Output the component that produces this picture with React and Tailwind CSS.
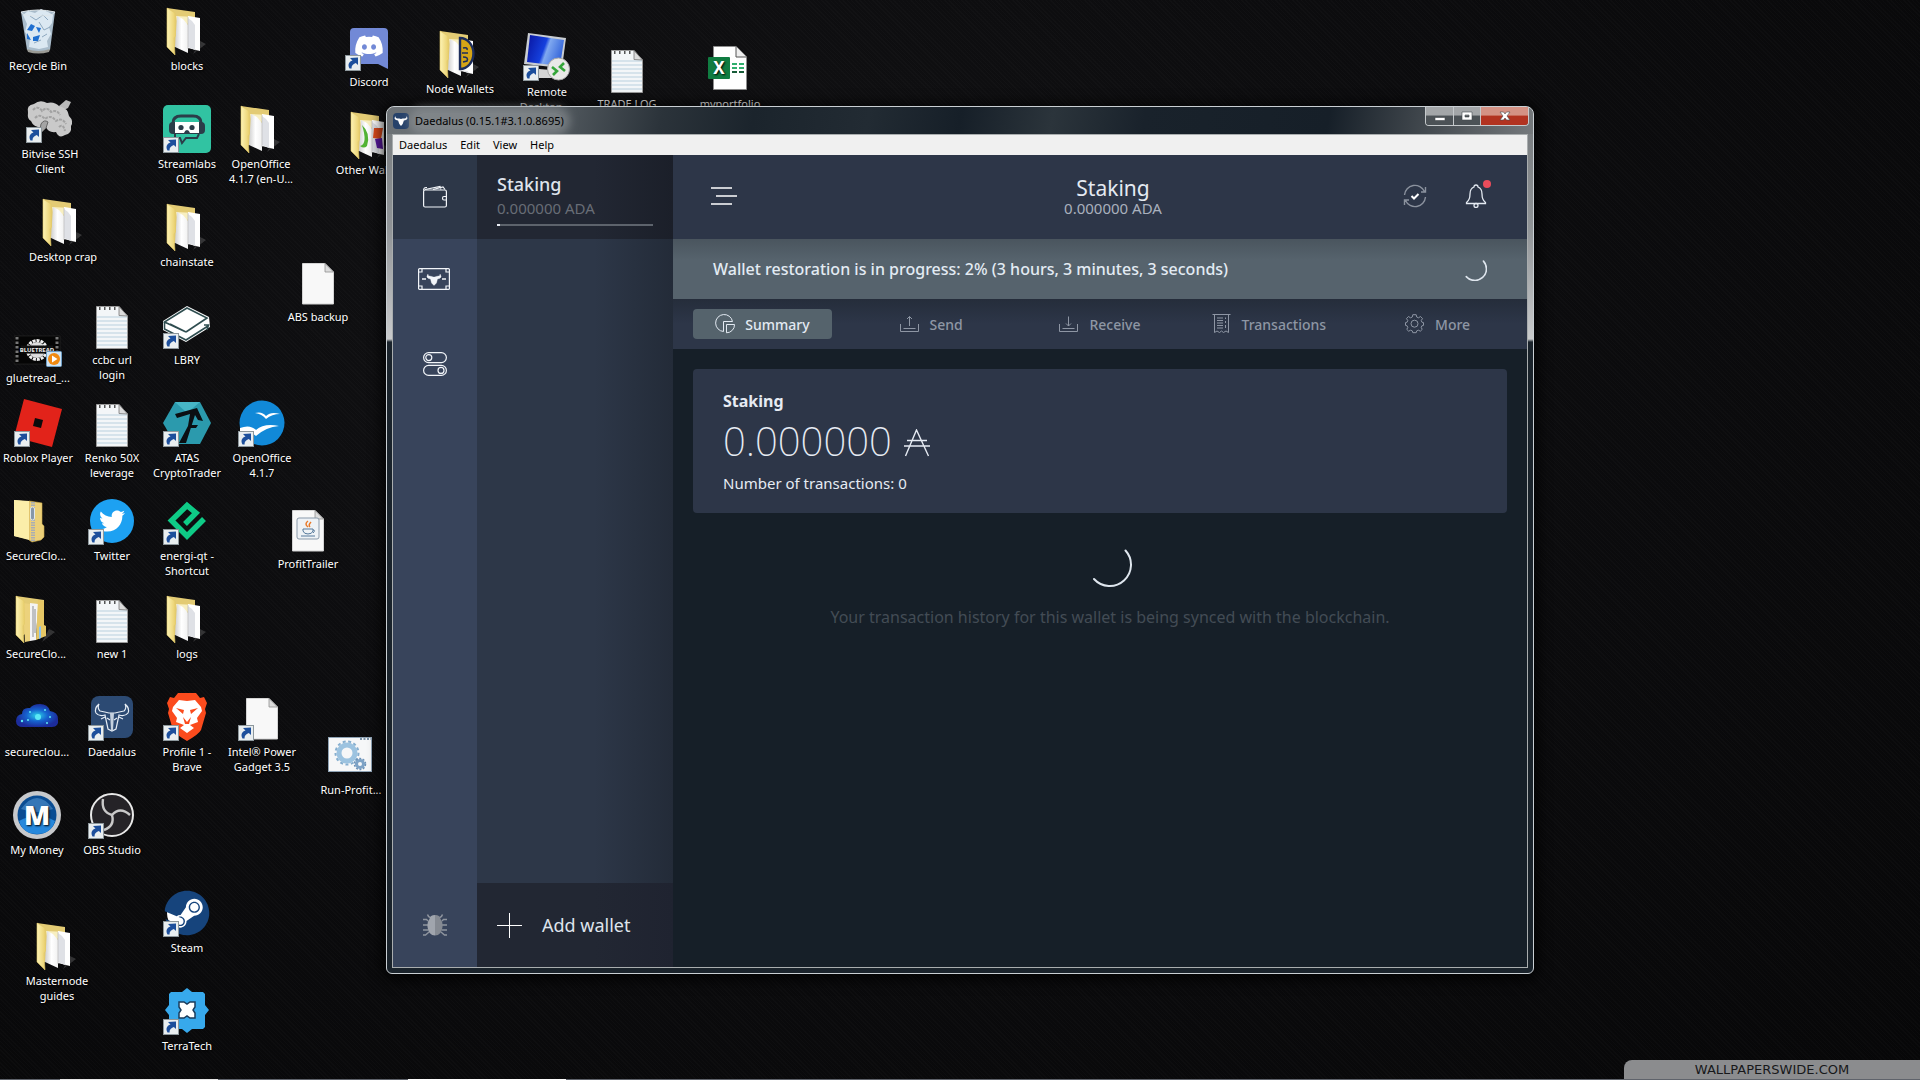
import React from 'react';
import { FaDiscord, FaTwitter, FaSteam } from 'react-icons/fa';

function Shortcut() {
  return (
    <g>
      <rect x="0.5" y="32.5" width="15" height="15" fill="#e9eef0" stroke="#8d979c" />
      <path d="M4.5 45.5 C2.5 42 3.5 38.8 7.5 37.5 L5 35 L13 34.5 L13 42 L10.8 40 C7.8 41 6.2 43 6.6 45.5 Z" fill="#1d4f9c" />
    </g>
  );
}

function Folder({ inner }) {
  return (
    <svg viewBox="0 0 48 48" className="size-12">
      <defs>
        <linearGradient id="fold" x1="0" x2="1" y1="0" y2="0">
          <stop offset="0" stopColor="#fdf3b4" />
          <stop offset="1" stopColor="#e9cf6c" />
        </linearGradient>
        <linearGradient id="paper" x1="0" x2="1" y1="0" y2="0">
          <stop offset="0" stopColor="#cfcfcf" />
          <stop offset="0.5" stopColor="#ffffff" />
          <stop offset="1" stopColor="#f1f1f1" />
        </linearGradient>
      </defs>
      <path d="M30 47 L43 37 L37 34 Z" fill="#ffffff" opacity="0.16" />
      <path d="M4 1 L32 5 L32 20 L12 40 L4 40 Z" fill="#e3cb74" />
      <path d="M13 9 L32 10 L32 14 L15 20 Z" fill="#f8efc0" />
      {inner === 'files' ? (
        <g>
          <path d="M11 8 L18 9 L18 46 L13 47 Z" fill="#ecd27c" />
          <path d="M18 8 L26 9 L24 45 L18 46 Z" fill="#f4f4f4" />
          <path d="M21 11 L21 42 M23 14 L23 38" stroke="#8a8d92" strokeWidth="1" />
          <path d="M26 5 L32 6 L32 30 L34 31 L34 41 L24 45 Z" fill="#e6c766" />
          <path d="M27 32 L29 31 L29 43 L27 44 Z" fill="#8dc3ee" />
        </g>
      ) : (
        <g>
          <path d="M14 9 L20 12 L25 18 L25 46 L12 40 Z" fill="url(#paper)" />
          <path d="M25 9 L37 11 L37 44 L25 41 Z" fill="#ffffff" />
          <path d="M25 11 L29 14 L32 18 L32 43 L25 40 Z" fill="#dfe1e6" />
          <path d="M25 10 L25 42" stroke="#b9b9b9" strokeWidth="0.7" />
        </g>
      )}
      {inner === 'coin' && (
        <g>
          <path d="M25 11 L37 13 L37 42 L25 40 Z" fill="#ffffff" />
          <path d="M24 8 A13 15 0 0 1 24 39 Z" fill="#d5a416" stroke="#1c2d5c" strokeWidth="2.4" />
          <path d="M27 18 Q32 17 31 20 M26 23 H32 M27 27 Q33 27 31 31 L27 32" stroke="#1c2d5c" strokeWidth="1.6" fill="none" />
        </g>
      )}
      {inner === 'art' && (
        <g>
          <path d="M15 14 Q24 22 20 35 Q17 38 13 35 Q21 33 15 14 Z" fill="#52b335" />
          <path d="M27 17 L36 17 L34 28 L26 27 Z" fill="#dc4a1c" />
          <path d="M28 28 L35 27 L36 38 L30 37 Z" fill="#5a1aa0" />
        </g>
      )}
      <path d="M4 1 L12 6 L12.500 29 L11 31 L12 48 L4 40 Z" fill="url(#fold)" stroke="#e2c968" strokeWidth="0.6" />
    </svg>
  );
}

function Zip() {
  return (
    <svg viewBox="0 0 48 48" className="size-12">
      <path d="M2 3 L20 5 L20 43 L2 39 Z" fill="#f7e79c" />
      <path d="M17 4 L30 6 L30 27 L32 29 L32 40 L29 43 L20 45 L17 43 Z" fill="#ecd079" stroke="#c9a94e" strokeWidth="0.6" />
      <path d="M2 3 L17 4 L17 43 L2 39 Z" fill="#fbeea9" />
      <path d="M21 5 L21 44" stroke="#a9adb3" strokeWidth="4" strokeDasharray="1.500 1" />
      <rect x="18.500" y="10" width="4" height="13" rx="2" fill="#8796a8" stroke="#dfe6ee" />
    </svg>
  );
}

function Notepad() {
  return (
    <svg viewBox="0 0 48 48" className="size-12">
      <path d="M8.500 5.500 H31 L39.500 15 V47.500 H8.500 Z" fill="#f3f6f8" stroke="#9a9a9a" />
      <path d="M9 16h30M9 20h30M9 24h30M9 28h30M9 32h30M9 36h30M9 40h30M9 44h30" stroke="#b9d0de" />
      <path d="M31 5.500 L31 14.500 L39.500 15 Z" fill="#dcdcdc" stroke="#777" strokeWidth="0.8" />
      <path d="M11 7.500 H31" stroke="#555" strokeWidth="3" strokeDasharray="1.500 3.500" />
    </svg>
  );
}

function Page({ java, shortcut }) {
  return (
    <svg viewBox="0 0 48 48" className="size-12">
      <path d="M8.500 5.500 H31 L39.500 14 V46 H8.500 Z" fill="#f8f8f8" stroke="#d4d4d4" />
      <path d="M31 5.500 V14 H39.500 Z" fill="#dcdcdc" stroke="#8f8f8f" strokeWidth="0.8" />
      {java && (
        <g fill="none">
          <rect x="13" y="13" width="22" height="21" rx="2" fill="#eef2f6" stroke="#8a9aab" />
          <path d="M24 16 Q20 19 24 22 M27 17 Q24 20 26 22" stroke="#e87a2b" strokeWidth="1.5" />
          <path d="M19 24 H29 V26 Q28 29 24 29 Q20 29 19 26 Z M29 25 Q32 25 29 28" stroke="#54789b" />
          <path d="M17 31 H31" stroke="#54789b" />
        </g>
      )}
      {shortcut && <Shortcut />}
    </svg>
  );
}

function RecycleBin() {
  return (
    <svg viewBox="0 0 48 48" className="size-12">
      <path d="M7 5 Q24 1 41 5 L36 43 Q24 48 13 43 Z" fill="#a9bccb" />
      <path d="M9 8 L14 4 L21 6 L27 2 L34 5 L39 8 L38 16 L35 20 L37 27 L33 34 L34 40 L25 42 L15 40 L16 31 L11 25 L13 17 Z" fill="#dbe8f2" />
      <path d="M16 9 L22 13 L29 8 L34 13 M25 15 L30 23 L36 20 M28 30 L33 27 M20 36 L27 33" stroke="#8ea8bf" fill="none" />
      <path d="M7 5 Q24 1 41 5 Q40 9 24 9 Q8 9 7 5 Z" fill="none" stroke="#dfe6ea" />
      <path d="M13 42 Q24 46 36 42 L35 45 Q24 48 14 45 Z" fill="#9a9a94" />
      <path d="M13 23 L17 17 L21 19 L18 24 Z M22 20 L27 21 L25 26 M13 26 L17 33 L13 32 Z M19 30 L26 28 L24 34 L19 34 Z" fill="#1f6fd0" />
    </svg>
  );
}

function Bitvise() {
  return (
    <svg viewBox="0 0 48 48" className="size-12">
      <path d="M33 11 L40 5 L45 7 L42 13 L36 16 Z" fill="#b9b9b9" />
      <path d="M2 18 Q0 10 8 9 Q14 4 21 8 Q28 6 33 11 Q42 13 43 21 Q48 26 45 31 Q46 39 39 40 Q33 44 30 37 Q22 38 20 32 Q8 34 5 26 Q1 24 2 18 Z" fill="#c9c9c9" />
      <path d="M7 15 Q12 10 16 16 Q21 11 25 17 Q31 14 34 20 M9 23 Q14 18 19 24 Q25 19 30 26 Q36 22 40 29 M33 32 Q37 28 39 36" stroke="#a2a2a2" fill="none" strokeWidth="2" strokeDasharray="3 1" />
      <path d="M13 40 L15 29 Q18 24 22 27 L20 33 Z" fill="#a4a4a4" stroke="#666" />
      <Shortcut />
    </svg>
  );
}

function Streamlabs() {
  return (
    <svg viewBox="0 0 48 48" className="size-12">
      <rect width="48" height="48" rx="5" fill="#31c3a2" />
      <path d="M10 18 Q10 11 18 11 H30 Q38 11 38 18" fill="none" stroke="#2b3d49" strokeWidth="3" />
      <rect x="6" y="17" width="36" height="12" rx="4" fill="#2b3d49" />
      <path d="M12 17 H36 V28 H27 Q26 25 24 25 Q22 25 21 28 H12 Z" fill="#fff" />
      <circle cx="18" cy="22.500" r="2.600" fill="#2b3d49" />
      <circle cx="29" cy="22.500" r="2.600" fill="#2b3d49" />
      <path d="M12 29 V33 H17 L19 38 L23 33 H34 L36 29" fill="none" stroke="#2b3d49" strokeWidth="2" />
      <Shortcut />
    </svg>
  );
}

function Discord() {
  return (
    <div className="relative size-12">
      <svg viewBox="0 0 48 48" className="size-12">
        <path d="M9 5 H39 Q43 5 43 9 V46 L33 41 H9 Q5 41 5 37 V9 Q5 5 9 5 Z" fill="#7289d6" />
      </svg>
      <FaDiscord className="absolute left-[9px] top-[8px] size-[30px] text-white" />
      <svg viewBox="0 0 48 48" className="absolute inset-0 size-12">
        <Shortcut />
      </svg>
    </div>
  );
}

function Remote() {
  return (
    <svg viewBox="0 0 48 48" className="size-12">
      <defs>
        <linearGradient id="screen" x1="0" x2="1" y1="0.3" y2="0.6">
          <stop offset="0" stopColor="#0a1aa8" />
          <stop offset="0.45" stopColor="#1540dd" />
          <stop offset="0.55" stopColor="#7fa8f0" />
          <stop offset="1" stopColor="#2d5fd8" />
        </linearGradient>
      </defs>
      <path d="M5 0 L43 5 L39 35 L1 31 Z" fill="#c9cdd2" />
      <path d="M7 2 L41 7 L37 33 L4 29 Z" fill="url(#screen)" />
      <path d="M16 36 L28 37 L32 45 L16 45 Z" fill="#d5d5d5" />
      <circle cx="35.500" cy="36" r="11" fill="#e9e9e7" stroke="#a7a7a7" />
      <path d="M29 34 L34 38 L30 42 M41 30 L37 34 L42 38" fill="none" stroke="#35a639" strokeWidth="2.600" />
      <Shortcut />
    </svg>
  );
}

function Excel() {
  return (
    <svg viewBox="0 0 48 48" className="size-12">
      <path d="M7.500 1.500 H30 L40.500 12 V44.500 H7.500 Z" fill="#fff" stroke="#8d8d8d" />
      <path d="M30 1.500 V12 H40.500" fill="#eee" stroke="#555" />
      <path d="M26 19h5M26 23h5M33 19h5M33 23h5" stroke="#2fae6c" strokeWidth="2" />
      <path d="M26 27h5M33 27h5" stroke="#175c38" strokeWidth="2" />
      <rect x="2" y="12" width="22" height="22" rx="1" fill="#107c41" />
      <text x="13" y="29" textAnchor="middle" fontSize="17" fontWeight="700" fill="#fff">X</text>
      <path d="M0 0" />
    </svg>
  );
}

function Video() {
  return (
    <svg viewBox="0 0 48 48" className="size-12">
      <rect x="0" y="17" width="46" height="28" fill="#050505" stroke="#333" strokeWidth="0.5" />
      <path d="M3 18 V45 M43 18 V45" stroke="#777" strokeWidth="3" strokeDasharray="2.500 2" />
      <circle cx="23" cy="31" r="9.500" fill="none" stroke="#eee" strokeWidth="3" strokeDasharray="3 1" />
      <circle cx="23" cy="31" r="8" fill="#ddd" />
      <rect x="7" y="26.500" width="32" height="8" fill="#111" />
      <text x="23" y="33" textAnchor="middle" fontSize="6" fontWeight="700" fill="#eee">BLUETREAD</text>
      <rect x="32.500" y="32.500" width="15" height="15" rx="1" fill="#cfe4f5" stroke="#6d9cc4" />
      <circle cx="40" cy="40" r="6" fill="#f08a12" />
      <path d="M38 36.500 L43.500 40 L38 43.500 Z" fill="#fff" />
    </svg>
  );
}

function Lbry() {
  return (
    <svg viewBox="0 0 48 48" className="size-12">
      <path d="M0 20 L24 5 L46 16 L47 26 L23 41 L0 29 Z" fill="#fff" />
      <path d="M23 31 L1.500 21 L24 7 L44 17 L23 31 M1.500 21 V28 L23 39 L45 25 M41 24 L45.500 24 L44 29 M7 23 L23 31" fill="none" stroke="#2f4d50" strokeWidth="1.600" />
      <Shortcut />
    </svg>
  );
}

function Roblox() {
  return (
    <svg viewBox="0 0 48 48" className="size-12">
      <path d="M10 0 L48 10 L38 48 L0 38 Z" fill="#e2231a" />
      <path d="M21 19 L29 21 L27 29 L19 27 Z" fill="#0b0b0c" />
      <Shortcut />
    </svg>
  );
}

function Atas() {
  return (
    <svg viewBox="0 0 48 48" className="size-12">
      <path d="M12 3 H37 L48 24 L37 45 H12 L0 24 Z" fill="#2b9aad" />
      <path d="M12 3 H37 L24 14 Z" fill="#47b6c6" />
      <path d="M12 15 L34 9 L40 22 L35 21 L32 16 L23 44 H16 L25 27 L27 15 L14 19 Z M27 26 H35 L33 29 H26 Z" fill="#0b0f12" />
      <Shortcut />
    </svg>
  );
}

function OpenOffice() {
  return (
    <svg viewBox="0 0 48 48" className="size-12">
      <circle cx="24" cy="24" r="22.500" fill="#1189d8" />
      <path d="M17 14 Q24 12 28 17 Q33 12 42 15 Q34 15 28 20 Q24 15 17 14 Z" fill="#fff" />
      <path d="M2 29 Q12 25 18 31 Q26 24 41 27 Q28 28 18 37 Q11 31 2 33 Z" fill="#fff" />
      <Shortcut />
    </svg>
  );
}

function Twitter() {
  return (
    <div className="relative size-12">
      <svg viewBox="0 0 48 48" className="size-12">
        <circle cx="24" cy="24" r="22" fill="#1da1f2" />
      </svg>
      <FaTwitter className="absolute left-[11px] top-[11px] size-[26px] text-white" />
      <svg viewBox="0 0 48 48" className="absolute inset-0 size-12">
        <Shortcut />
      </svg>
    </div>
  );
}

function Energi() {
  return (
    <svg viewBox="0 0 48 48" className="size-12">
      <path d="M22 27 L33 16 L24 8.500 L8.500 23.500 L24 39 L41 22" fill="none" stroke="#0ecb86" strokeWidth="5.500" />
      <Shortcut />
    </svg>
  );
}

function Cloud() {
  return (
    <svg viewBox="0 0 48 48" className="size-12">
      <defs>
        <radialGradient id="cloud">
          <stop offset="0" stopColor="#2ad3e8" />
          <stop offset="0.5" stopColor="#1663cf" />
          <stop offset="1" stopColor="#1c2c9b" />
        </radialGradient>
      </defs>
      <path d="M10 34 Q3 34 3 28 Q3 22 9 21 Q9 14 17 15 Q20 11 27 11 Q35 11 37 18 Q45 19 45 26 Q46 34 39 34 Z" fill="url(#cloud)" />
      <g fill="#5ce9f5">
        <circle cx="25" cy="24" r="3" />
        <circle cx="17" cy="19" r="1" />
        <circle cx="32" cy="17" r="1" />
        <circle cx="37" cy="24" r="1" />
        <circle cx="9" cy="28" r="1.200" />
        <circle cx="34" cy="30" r="1" />
        <circle cx="15" cy="27" r="1" />
      </g>
    </svg>
  );
}

function DaedalusIcon() {
  return (
    <svg viewBox="0 0 48 48" className="size-12">
      <rect x="3" y="3" width="42" height="42" rx="8" fill="#2c4a73" />
      <g fill="none" stroke="#e6edf5" strokeWidth="1.200">
        <path d="M11 11 Q6 15 8 20 Q11 24 17 22 L20 36 L24 38 L28 36 L31 22 Q37 24 40 20 Q42 15 37 11 Q39 15 36 18 Q31 19 27 20 H21 Q17 19 12 18 Q9 15 11 11 Z" />
        <path d="M13 26 L17 24 M35 26 L31 24 M19 25 L22 27 M29 25 L26 27" />
      </g>
      <path d="M22 20 H26 L25 37 H23 Z" fill="#c4d0de" />
      <Shortcut />
    </svg>
  );
}

function Brave() {
  return (
    <svg viewBox="0 0 48 48" className="size-12">
      <path d="M15 0 H33 L37 5 L41 4 L44 10 L42 16 L43 20 L38 37 Q36 41 24 48 Q12 41 10 37 L5 20 L6 16 L4 10 L7 4 L11 5 Z" fill="#fb4b1d" />
      <path d="M24 8 L32 7 L38 14 L39 18 L34 25 L35 29 L27 32 L31 35 L24 40 L17 35 L21 32 L13 29 L14 25 L9 18 L10 14 L16 7 Z" fill="#fff" />
      <path d="M13 15 L21 17 L20 21 Z M35 15 L27 17 L28 21 Z M20 24 L24 29 L28 24 L26 31 H22 Z" fill="#fb4b1d" />
      <Shortcut />
    </svg>
  );
}

function Gears() {
  return (
    <svg viewBox="0 0 48 48" className="size-12">
      <rect x="1.500" y="6.500" width="43" height="34" fill="#f6f7f8" stroke="#8fa3b5" />
      <path d="M33 8 H44" stroke="#52708c" strokeWidth="1.500" strokeDasharray="2 1.500" />
      <circle cx="20" cy="22" r="8" fill="none" stroke="#9cc3e0" strokeWidth="5" />
      <circle cx="20" cy="22" r="11.500" fill="none" stroke="#85aecf" strokeWidth="2" strokeDasharray="3 2.500" />
      <circle cx="33" cy="33" r="3.500" fill="none" stroke="#7ea3c6" strokeWidth="3" />
      <circle cx="33" cy="33" r="5.500" fill="none" stroke="#6c92b8" strokeWidth="1.500" strokeDasharray="2 1.500" />
    </svg>
  );
}

function MyMoney() {
  return (
    <svg viewBox="0 0 48 48" className="size-12">
      <circle cx="24" cy="24" r="24" fill="#c7c9cc" />
      <circle cx="24" cy="24" r="19.500" fill="#0a4d93" />
      <path d="M6 30 Q24 20 42 30 Q38 43 24 43 Q10 43 6 30 Z" fill="#2688dc" />
      <path d="M8 18 Q24 -4 40 18 Q24 24 8 18 Z" fill="#5294cf" opacity="0.6" />
      <text x="24" y="34" textAnchor="middle" fontSize="27" fontWeight="900" fill="#fff">M</text>
    </svg>
  );
}

function Obs() {
  return (
    <svg viewBox="0 0 48 48" className="size-12">
      <circle cx="24" cy="24" r="21" fill="#252327" stroke="#e8e8e8" strokeWidth="2" />
      <g fill="none" stroke="#c9c9c9" strokeWidth="2.400">
        <path d="M24 24 Q13 21 15 8" />
        <path d="M24 24 Q32 15 42 24" />
        <path d="M24 24 Q27 35 16 39" />
      </g>
      <Shortcut />
    </svg>
  );
}

function Steam() {
  return (
    <div className="relative size-12">
      <svg viewBox="0 0 48 48" className="size-12">
        <circle cx="24" cy="24" r="20" fill="#fff" />
      </svg>
      <FaSteam className="absolute left-[1px] top-[1px] size-[46px] text-[#16447c]" />
      <svg viewBox="0 0 48 48" className="absolute inset-0 size-12">
        <Shortcut />
      </svg>
    </div>
  );
}

function TerraTech() {
  return (
    <svg viewBox="0 0 48 48" className="size-12">
      <path d="M8 5 H19 L24 1 L29 5 H40 L42 7 V18 L46 23 L42 28 V40 L40 42 H29 L24 46 L19 42 H8 L6 40 V28 L2 23 L6 18 V7 Z" fill="#37a9ec" />
      <path d="M16 15 H21 L24 17 L27 15 H32 V20 L30 23 L32 26 V31 H27 L24 29 L21 31 H16 V26 L18 23 L16 20 Z" fill="#fff" stroke="#1b3c5c" strokeWidth="1.500" />
      <Shortcut />
    </svg>
  );
}

const shortcuts = [
  { label: 'Recycle Bin', icon: <RecycleBin />, x: 38, y: 7 },
  { label: 'blocks', icon: <Folder />, x: 187, y: 7 },
  { label: 'Discord', icon: <Discord />, x: 369, y: 23 },
  { label: 'Node Wallets', icon: <Folder inner="coin" />, x: 460, y: 30 },
  { label: 'Remote Desktop ...', icon: <Remote />, x: 547, y: 33 },
  { label: 'TRADE LOG', icon: <Notepad />, x: 627, y: 45 },
  { label: 'myportfolio', icon: <Excel />, x: 730, y: 45 },
  { label: 'Bitvise SSH Client', icon: <Bitvise />, x: 50, y: 95 },
  { label: 'Streamlabs OBS', icon: <Streamlabs />, x: 187, y: 105 },
  { label: 'OpenOffice 4.1.7 (en-U...', icon: <Folder />, x: 261, y: 105 },
  { label: 'Other Wallets', icon: <Folder inner="art" />, x: 371, y: 111 },
  { label: 'Desktop crap', icon: <Folder />, x: 63, y: 198 },
  { label: 'chainstate', icon: <Folder />, x: 187, y: 203 },
  { label: 'ABS backup', icon: <Page />, x: 318, y: 258 },
  { label: 'gluetread_...', icon: <Video />, x: 38, y: 319 },
  { label: 'ccbc url\nlogin', icon: <Notepad />, x: 112, y: 301 },
  { label: 'LBRY', icon: <Lbry />, x: 187, y: 301 },
  { label: 'Roblox Player', icon: <Roblox />, x: 38, y: 399 },
  { label: 'Renko 50X leverage', icon: <Notepad />, x: 112, y: 399 },
  { label: 'ATAS CryptoTrader', icon: <Atas />, x: 187, y: 399 },
  { label: 'OpenOffice 4.1.7', icon: <OpenOffice />, x: 262, y: 399 },
  { label: 'SecureClo...', icon: <Zip />, x: 36, y: 497 },
  { label: 'Twitter', icon: <Twitter />, x: 112, y: 497 },
  { label: 'energi-qt - Shortcut', icon: <Energi />, x: 187, y: 497 },
  { label: 'ProfitTrailer', icon: <Page java />, x: 308, y: 505 },
  { label: 'SecureClo...', icon: <Folder inner="files" />, x: 36, y: 595 },
  { label: 'new 1', icon: <Notepad />, x: 112, y: 595 },
  { label: 'logs', icon: <Folder />, x: 187, y: 595 },
  { label: 'secureclou...', icon: <Cloud />, x: 37, y: 693 },
  { label: 'Daedalus', icon: <DaedalusIcon />, x: 112, y: 693 },
  { label: 'Profile 1 - Brave', icon: <Brave />, x: 187, y: 693 },
  { label: 'Intel® Power Gadget 3.5', icon: <Page shortcut />, x: 262, y: 693 },
  { label: 'Run-Profit...', icon: <Gears />, x: 351, y: 731 },
  { label: 'My Money', icon: <MyMoney />, x: 37, y: 791 },
  { label: 'OBS Studio', icon: <Obs />, x: 112, y: 791 },
  { label: 'Steam', icon: <Steam />, x: 187, y: 889 },
  { label: 'Masternode guides', icon: <Folder />, x: 57, y: 922 },
  { label: 'TerraTech', icon: <TerraTech />, x: 187, y: 987 },
];

function DesktopIcon({ label, icon, x, y }) {
  return (
    <button
      type="button"
      className="absolute flex w-[76px] -translate-x-1/2 flex-col items-center gap-[3px] text-center text-[11px] leading-[15px] text-white [text-shadow:1px_1px_2px_#000]"
      style={{ left: x, top: y }}
    >
      {icon}
      <span className="whitespace-pre-line">{label}</span>
    </button>
  );
}

function Bull({ className }) {
  return (
    <svg viewBox="0 0 16 12" className={className} fill="currentColor">
      <path d="M1.500 0 Q1 2.500 3.500 3 L6 3 Q8 4 10 3 L12.500 3 Q15 2.500 14.500 0 Q17 3 14.500 4.500 Q13 5.500 11.500 5.500 L10 9.500 L8 12 L6 9.500 L4.500 5.500 Q3 5.500 1.500 4.500 Q-1 3 1.500 0 Z" />
    </svg>
  );
}

function TitleBar() {
  return (
    <div className="flex h-[27px] justify-between rounded-t-lg bg-[linear-gradient(100deg,#6d7276_0%,#5f666b_12%,#2b333a_24%,#1b242c_32%,#222b33_42%,#161f28_50%,#2b343b_58%,#19222b_66%,#161f28_82%,#4a5055_92%,#75797c_100%)] pl-1.5">
      <div className="flex items-center gap-1.5">
        <span className="flex size-4 items-center justify-center rounded-sm bg-[#27426a] text-white">
          <Bull className="h-[10px] w-[14px]" />
        </span>
        <span className="rounded-full bg-[#8f9497]/60 text-[11px] leading-4 text-black shadow-[0_0_8px_6px_rgba(143,148,151,0.6)]">
          Daedalus (0.15.1#3.1.0.8695)
        </span>
      </div>
      <div className="mr-1 flex h-[19px] overflow-hidden rounded-b-[4px] border border-t-0 border-[#c5c9cb] text-white">
        <button type="button" aria-label="Minimize" className="flex w-7 items-center justify-center border-r border-[#c5c9cb] bg-linear-to-b from-[#a3a6a8] from-45% to-[#4c5256] to-50%">
          <svg viewBox="0 0 12 12" className="size-3">
            <path d="M1 7.500h10v3h-10z" fill="#fff" stroke="#45494d" strokeWidth="0.6" />
          </svg>
        </button>
        <button type="button" aria-label="Maximize" className="flex w-[27px] items-center justify-center border-r border-[#c5c9cb] bg-linear-to-b from-[#a3a6a8] from-45% to-[#4c5256] to-50%">
          <svg viewBox="0 0 12 12" className="size-3">
            <path d="M1 2h10v8h-10z M4 5v2h4v-2z" fill="#fff" fillRule="evenodd" stroke="#45494d" strokeWidth="0.6" />
          </svg>
        </button>
        <button type="button" aria-label="Close" className="flex w-[47px] items-center justify-center bg-linear-to-b from-[#d49284] from-45% to-[#b23320] to-50%">
          <svg viewBox="0 0 12 12" className="size-3">
            <path d="M1 2h3.500L6 4l1.500-2H11L8 6l3 4H7.500L6 8l-1.500 2H1l3-4z" fill="#fff" stroke="#45494d" strokeWidth="0.6" />
          </svg>
        </button>
      </div>
    </div>
  );
}

function MenuBar() {
  return (
    <nav className="flex h-5 items-center gap-[13px] bg-[#f0f0f0] px-1.5 text-[11px] text-black">
      {['Daedalus', 'Edit', 'View', 'Help'].map((item) => (
        <button key={item} type="button">{item}</button>
      ))}
    </nav>
  );
}

function Sidebar() {
  return (
    <aside className="flex w-[84px] shrink-0 flex-col bg-[#38445b] text-[#f2f5f9]">
      <button type="button" aria-label="Wallets" className="flex h-[84px] items-center justify-center bg-[#2d3748]">
        <svg viewBox="0 0 24 24" className="size-6" fill="none" stroke="currentColor" strokeWidth="1.200">
          <rect x="0.600" y="5" width="22.800" height="17" rx="1.500" />
          <path d="M0.600 5.500 Q0.600 2.500 3 2.500 L4 2.500 M2 4.500 L17 1.500 L18 4.500 M10 4.500 L20 2 L22 4.500" />
          <path d="M23.500 11.500 H21 Q19.500 11.500 19.500 13.200 Q19.500 15 21 15 H23.500" />
        </svg>
      </button>
      <button type="button" aria-label="Staking" className="flex h-[84px] items-center justify-center pr-0.5 pb-1">
        <svg viewBox="0 0 32 22" className="h-[22px] w-8" fill="none" stroke="currentColor" strokeWidth="1.200">
          <rect x="0.600" y="0.600" width="30.800" height="20.800" rx="1" />
          <path d="M4 1 L4 4 L1 4 M28 1 V4 H31 M1 18 H4 V21 M31 18 H28 V21" />
          <path d="M4 11 H8 M24 11 H28" strokeWidth="1.600" />
          <path d="M10 6 Q9.500 8 11.500 8 L14 8.500 Q16 9.500 18 8.500 L20.500 8 Q22.500 8 22 6 Q24.500 9 21.500 10.500 L19.500 11 L18.500 15 L16 17.500 L13.500 15 L12.500 11 L10.500 10.500 Q7.500 9 10 6 Z" fill="currentColor" strokeWidth="0.300" />
        </svg>
      </button>
      <button type="button" aria-label="Settings" className="flex h-[84px] items-center justify-center pb-0.5">
        <svg viewBox="0 0 24 24" className="size-6" fill="none" stroke="currentColor" strokeWidth="1.200">
          <rect x="0.600" y="0.600" width="22.800" height="10" rx="5" />
          <rect x="0.600" y="13.400" width="22.800" height="10" rx="5" />
          <circle cx="5.800" cy="5.600" r="3" />
          <circle cx="18" cy="18.400" r="3" />
        </svg>
      </button>
      <button type="button" aria-label="Network info" className="mt-auto flex h-[84px] items-center justify-center">
        <svg viewBox="0 0 24 22" className="h-[22px] w-6" fill="none" stroke="#8f959f" strokeWidth="1.400">
          <path d="M4.500 0.500 Q5 3 8 4 M19.500 0.500 Q19 3 16 4 M0 5.500 H3.500 L5 7 M24 5.500 H20.500 L19 7 M0 11 H5 M24 11 H19 M0 16 H5 M24 16 H19 M0 21 H2.500 L6 18 M24 21 H21.500 L18 18" />
          <path d="M12 1 Q17 1 17.500 5 Q20 8 19.500 13 Q18.500 21.500 12 21.500 Z" fill="#858a92" stroke="none" />
          <path d="M12 1 Q7 1 6.500 5 Q4 8 4.500 13 Q5.500 21.500 12 21.500 Z" fill="#a0a5ad" stroke="none" />
        </svg>
      </button>
    </aside>
  );
}

function WalletList() {
  return (
    <section className="flex w-[196px] shrink-0 flex-col justify-between bg-[linear-gradient(90deg,#2d3748_60%,#232b38_100%)]">
      <button type="button" className="h-[84px] bg-[linear-gradient(90deg,#222733_60%,#1b1f29_100%)] px-5 pt-1 text-left">
        <span className="block text-[18px] leading-6 font-medium text-[#dfe4ec]">Staking</span>
        <span className="block pt-1 text-[15px] leading-4 text-[#686d76]">0.000000 ADA</span>
        <span className="mt-2 block h-0.5 bg-[#5d636c]">
          <span className="block h-0.5 w-[2%] bg-[#e9edf3]" />
        </span>
      </button>
      <button type="button" className="flex h-[84px] items-center gap-5 bg-[linear-gradient(90deg,#222733_60%,#1f2330_100%)] px-5 text-[18px] text-[#dfe4ec]">
        <svg viewBox="0 0 25 25" className="size-[25px]" stroke="#fff">
          <path d="M12.500 0V25M0 12.500H25" />
        </svg>
        Add wallet
      </button>
    </section>
  );
}

function TopBar() {
  return (
    <header className="flex h-[84px] items-center justify-between bg-[#2d3648] pr-10 pb-0.5 pl-[38px] text-[#e4eaf2]">
      <button type="button" aria-label="Toggle menu" className="w-28">
        <svg viewBox="0 0 26 18" className="h-[18px] w-[26px]" stroke="#fff" strokeWidth="1.400">
          <path d="M0 1H21M5 9H26M0 17H21" />
        </svg>
      </button>
      <div className="text-center">
        <h1 className="text-[21px] leading-6">Staking</h1>
        <p className="text-[15px] leading-4 text-[#a9b0bd]">0.000000 ADA</p>
      </div>
      <div className="flex w-[84px] items-center justify-between">
        <svg viewBox="0 0 24 24" className="size-6" fill="none" stroke="#8b929e" strokeWidth="1.400">
          <path d="M1.500 11 A10.500 10.500 0 0 1 21.500 7.500 M22.500 3 V8 H18 M22.500 13 A10.500 10.500 0 0 1 2.500 16.500 M1.500 21 V16 H6" />
          <path d="M8.500 12 L11 14.500 L15.500 10" stroke="#fff" strokeWidth="2" />
        </svg>
        <button type="button" aria-label="Notifications" className="relative">
          <svg viewBox="0 0 22 24" className="h-6 w-[22px]" fill="none" stroke="currentColor" strokeWidth="1.300">
            <path d="M9 3 Q9 1 11 1 Q13 1 13 3 Q17 4.500 17 10 Q17 16 20.500 18.500 V19.500 H1.500 V18.500 Q5 16 5 10 Q5 4.500 9 3 Z" />
            <circle cx="11" cy="21.500" r="2" />
          </svg>
          <span className="absolute -top-1 -right-1 size-2 rounded-full bg-[#ea4c5b]" />
        </button>
      </div>
    </header>
  );
}

const tabs = [
  {
    name: 'Summary',
    icon: (
      <>
        <path d="M17.500 7.500 A8.500 8.500 0 1 0 8.500 17.500 V7.500 Z" />
        <path d="M11.500 10.500 H19.500 A8 8 0 0 1 11.500 18.800 Z" />
      </>
    ),
  },
  { name: 'Send', icon: <path d="M0.500 10 V17.500 H18.500 V10 M3.500 14.500 H15.500 M9.500 12 V2.500 M7 5 L9.500 2.500 L12 5" /> },
  { name: 'Receive', icon: <path d="M0.500 10 V17.500 H18.500 V10 M3.500 14.500 H15.500 M9.500 2.500 V12 M7 9.500 L9.500 12 L12 9.500" /> },
  {
    name: 'Transactions',
    icon: <path d="M0.500 0.500 H18.500 M2.500 0.500 V18.500 L5 17 L7.500 18.500 L9.500 17 L11.500 18.500 L14 17 L16.500 18.500 V0.500 M5 4 H11 M5 6.500 H11 M5 9 H11 M5 11.500 H11 M5 14 H11 M13.500 3.500 V5 M13.500 7 V9 M13.500 11 V14" />,
  },
  {
    name: 'More',
    icon: (
      <>
        <path d="M7.800 0.700 H11.200 L11.700 3 L13.500 3.800 L15.500 2.500 L17.500 4.600 L16.200 6.600 L16.900 8.200 L18.500 8.600 V11.400 L16.900 11.800 L16.200 13.400 L17.200 15.400 L15.300 17.200 L13.400 16.200 L11.700 16.900 L11.200 18.700 H7.800 L7.300 16.900 L5.600 16.200 L3.700 17.200 L1.800 15.400 L2.800 13.400 L2.100 11.800 L0.500 11.400 V8.600 L2.100 8.200 L2.800 6.600 L1.500 4.600 L3.500 2.500 L5.500 3.800 L7.300 3 Z" />
        <circle cx="9.500" cy="9.700" r="3.500" />
      </>
    ),
  },
];

function Tabs() {
  return (
    <nav className="grid h-[50px] grid-cols-5 items-center justify-items-center bg-[linear-gradient(180deg,#252d3b_0%,#2d3648_50%)] px-[5px]">
      {tabs.map((tab, i) => (
        <button
          key={tab.name}
          type="button"
          className={
            i === 0
              ? 'flex h-[30px] items-center gap-2.5 rounded bg-[#55636c] px-[22px] text-[14px] font-medium text-[#e3eaf2]'
              : 'flex h-[30px] items-center gap-2.5 text-[14px] font-medium text-[#8e96a4]'
          }
        >
          <svg viewBox="0 0 20 20" className="size-5" fill="none" stroke="currentColor" strokeWidth="1">
            {tab.icon}
          </svg>
          {tab.name}
        </button>
      ))}
    </nav>
  );
}

function Spinner({ className }) {
  return (
    <svg viewBox="0 0 44 44" className={className} fill="none" stroke="#dfe6ee" strokeLinecap="round">
      <path d="M37.500 7.500 A21 21 0 0 1 6 36" />
    </svg>
  );
}

function Summary() {
  return (
    <main className="flex-1 bg-[#161f28] py-5 pl-5">
      <section className="mr-5 rounded bg-[#2d3648] px-[30px] py-5 text-[#e6ebf3]">
        <h2 className="text-[16px] leading-6 font-bold">Staking</h2>
        <div className="flex items-center gap-3 pt-1 pb-2">
          <span className="text-[40px] leading-[48px] font-extralight">0.000000</span>
          <svg viewBox="0 0 26 28" className="mt-1 h-7 w-[26px]" fill="none" stroke="currentColor" strokeWidth="1.400">
            <path d="M1.500 27 L12.500 1 L24.500 27 M3 11.500 H23 M0 17 H26" />
          </svg>
        </div>
        <p className="text-[15px] leading-5">Number of transactions: 0</p>
      </section>
      <div className="flex flex-col items-center gap-[18px] pt-[30px]">
        <Spinner className="size-11 stroke-2" />
        <p className="text-[16px] leading-6 text-[#434c55]">
          Your transaction history for this wallet is being synced with the blockchain.
        </p>
      </div>
    </main>
  );
}

export default function App() {
  return (
    <div className="relative min-h-screen overflow-hidden bg-[#09090a] bg-[repeating-linear-gradient(45deg,rgba(255,255,255,0.014)_0_1px,transparent_1px_3px),radial-gradient(ellipse_at_40%_30%,#121214_0%,#0c0c0e_45%,#070708_100%)] font-['Noto_Sans',sans-serif]">
      {shortcuts.map((item) => (
        <DesktopIcon key={`${item.x}-${item.y}`} {...item} />
      ))}

      <div className="absolute inset-x-[386px] inset-y-[106px] flex flex-col rounded-t-lg rounded-b-md border border-[#c9cfd3] bg-[linear-gradient(180deg,#75797c_0,#8f9396_120px,#c9cbcc_232px,#1a232b_235px)] shadow-[0_2px_14px_4px_rgba(0,0,0,0.8)]">
        <TitleBar />
        <div className="mx-[5px] mb-[5px] flex flex-1 flex-col border border-[#a9adae]">
          <MenuBar />
          <div className="flex flex-1">
            <Sidebar />
            <WalletList />
            <div className="flex flex-1 flex-col">
              <TopBar />
              <div className="flex h-[60px] items-center justify-between bg-[linear-gradient(180deg,#4a555e_0%,#56636d_35%)] px-10">
                <p className="text-[16px] font-medium text-[#e3ebf3]">
                  Wallet restoration is in progress: 2% (3 hours, 3 minutes, 3 seconds)
                </p>
                <Spinner className="size-6 stroke-3" />
              </div>
              <Tabs />
              <Summary />
            </div>
          </div>
        </div>
      </div>

      <div className="absolute right-0 bottom-px flex h-[19px] w-[296px] items-center justify-center rounded-tl-lg bg-[#8b8c8e] font-['DejaVu_Sans',sans-serif] text-[13px] text-[#17181a]">
        WALLPAPERSWIDE.COM
      </div>
      <footer className="absolute inset-x-0 bottom-0 flex h-px bg-[#5f636b]">
        <span className="ml-[60px] w-[158px] bg-[#e8e8e8]" />
        <span className="ml-[190px] w-[158px] bg-white" />
      </footer>
    </div>
  );
}
